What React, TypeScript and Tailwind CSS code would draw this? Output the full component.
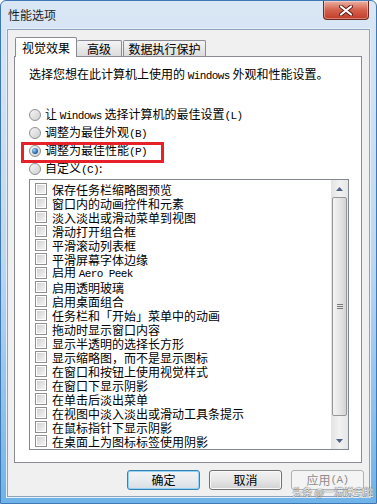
import React from "react";

const cjk = "font-['Noto_Sans_CJK_SC','Noto_Sans',sans-serif]";

// half-width latin, SimSun-like
const L = ({ t }: { t: string }) => (
  <span className="font-['Liberation_Mono',monospace] text-[11px] tracking-[-0.6px]">{t}</span>
);

const items: React.ReactNode[] = [
  "保存任务栏缩略图预览",
  "窗口内的动画控件和元素",
  "淡入淡出或滑动菜单到视图",
  "滑动打开组合框",
  "平滑滚动列表框",
  "平滑屏幕字体边缘",
  <>启用 <L t="Aero Peek" /></>,
  "启用透明玻璃",
  "启用桌面组合",
  "任务栏和「开始」菜单中的动画",
  "拖动时显示窗口内容",
  "显示半透明的选择长方形",
  "显示缩略图，而不是显示图标",
  "在窗口和按钮上使用视觉样式",
  "在窗口下显示阴影",
  "在单击后淡出菜单",
  "在视图中淡入淡出或滑动工具条提示",
  "在鼠标指针下显示阴影",
  "在桌面上为图标标签使用阴影",
];

const Radio = ({ checked = false }: { checked?: boolean }) => (
  <span className="flex h-[12px] w-[12px] shrink-0 items-center justify-center rounded-full border border-[#8e8f8f] bg-gradient-to-br from-[#f6f6f6] to-[#cfcfcf]">
    {checked && (
      <span className="h-[6px] w-[6px] rounded-full bg-[radial-gradient(circle_at_35%_35%,#9fd3f7,#1b5a9e_70%)]" />
    )}
  </span>
);

const Check = () => (
  <span className="flex h-[12px] w-[12px] shrink-0 items-center justify-center border border-[#8e8f8f] bg-white">
    <span className="h-[8px] w-[8px] bg-gradient-to-br from-[#d2d2d2] to-[#f4f4f4]" />
  </span>
);

const Arrow = ({ up }: { up?: boolean }) => (
  <svg width="7" height="4" viewBox="0 0 7 4">
    <path d={up ? "M0 4 L3.5 0 L7 4 Z" : "M0 0 L3.5 4 L7 0 Z"} fill="#4d6185" />
  </svg>
);

const Radiorow = ({ checked, children }: { checked?: boolean; children: React.ReactNode }) => (
  <div className="flex h-[18px] items-center gap-[4px]">
    <Radio checked={checked} />
    <span className="leading-[14px]">{children}</span>
  </div>
);

export default function App() {
  return (
    <div
      className={`relative flex h-[504px] w-[377px] flex-col overflow-hidden rounded-t-[6px] border border-[#3f79b5] bg-gradient-to-b from-[#dae7f5] via-[#bfd8f1] to-[#6fb3e8] text-[12px] leading-[14px] text-black ${cjk}`}
    >
      {/* title bar */}
      <div className="flex h-[28px] shrink-0 items-start justify-between pl-[7px] pr-[7px]">
        <span className="mt-[7px] text-[12px] text-[#1e1e1e]">性能选项</span>
        <div className="flex h-[19px] w-[46px] items-center justify-center rounded-b-[4px] border border-t-0 border-[#6e2a22] bg-gradient-to-b from-[#eab0a4] via-[#d4604c] to-[#c13c29] shadow-[inset_0_0_0_1px_rgba(255,255,255,0.35)]">
          <svg width="14" height="11" viewBox="0 0 14 11">
            <path d="M2 1.5 L12 9.5 M12 1.5 L2 9.5" stroke="#5a1d16" strokeWidth="4" strokeLinecap="round" />
            <path d="M2 1.5 L12 9.5 M12 1.5 L2 9.5" stroke="#ffffff" strokeWidth="2.2" strokeLinecap="round" />
          </svg>
        </div>
      </div>

      {/* client area */}
      <div className="mx-[6px] mb-[6px] flex flex-1 flex-col border border-[#8da2bb] bg-[#f0f0f0] pl-[6px] pt-[7px] shadow-[0_0_0_1px_#e6f0fa]">
        {/* tabs */}
        <div className="ml-[1px] flex h-[19px] items-end">
          <div className="relative z-10 mb-[-1px] flex h-[20px] w-[62px] items-center justify-center rounded-t-[2px] border border-b-0 border-[#898c95] bg-white pt-[1px] text-[12px]">
            视觉效果
          </div>
          <div className="flex h-[16px] w-[45px] items-center justify-center rounded-t-[2px] border border-b-0 border-l-0 border-[#898c95] bg-gradient-to-b from-[#f4f4f4] to-[#dcdcdc] text-[12px]">
            高级
          </div>
          <div className="ml-[1px] flex h-[16px] w-[83px] items-center justify-center rounded-t-[2px] border border-b-0 border-[#898c95] bg-gradient-to-b from-[#f4f4f4] to-[#dcdcdc] text-[12px]">
            数据执行保护
          </div>
        </div>

        {/* panel */}
        <div className="flex h-[407px] w-[348px] flex-col border border-[#898c95] bg-white pl-[14px] pt-[10px]">
          <div>
            选择您想在此计算机上使用的 <L t="Windows" /> 外观和性能设置。
          </div>
          <div className="mt-[23px] flex flex-col">
            <Radiorow>
              让 <L t="Windows" /> 选择计算机的最佳设置<L t="(L)" />
            </Radiorow>
            <Radiorow>
              调整为最佳外观<L t="(B)" />
            </Radiorow>
            <div className="relative">
              <Radiorow checked>
                调整为最佳性能<L t="(P)" />
              </Radiorow>
              <div className="pointer-events-none absolute left-[-8px] top-0 h-[21px] w-[143px] border-[3px] border-[#e62129]" />
            </div>
            <Radiorow>
              自定义<L t="(C)" />:
            </Radiorow>
          </div>

          {/* list box */}
          <div className="mt-[1px] flex h-[271px] w-[320px] border border-[#828790] bg-white">
            <div className="flex flex-1 flex-col pl-[5px] pt-[2px]">
              {items.map((it, i) => (
                <div key={i} className="flex h-[14px] items-center gap-[5px] whitespace-nowrap">
                  <Check />
                  <span className="leading-[13px]">{it}</span>
                </div>
              ))}
            </div>
            {/* scrollbar */}
            <div className="flex w-[17px] flex-col bg-gradient-to-r from-[#e3e3e3] via-[#f2f2f2] to-[#e6e6e6]">
              <div className="flex h-[17px] items-center justify-center">
                <Arrow up />
              </div>
              <div className="mx-[1px] flex h-[219px] items-center justify-center rounded-[2px] border border-[#979797] bg-gradient-to-r from-[#f4f4f4] via-[#e6e6e6] to-[#d4d4d4]">
                <div className="flex flex-col gap-[1px]">
                  <span className="h-[1px] w-[6px] bg-[#7a7a7a]" />
                  <span className="h-[1px] w-[6px] bg-[#7a7a7a]" />
                  <span className="h-[1px] w-[6px] bg-[#7a7a7a]" />
                </div>
              </div>
              <div className="flex-1" />
              <div className="flex h-[17px] items-center justify-center">
                <Arrow />
              </div>
            </div>
          </div>
        </div>

        {/* buttons */}
        <div className="mt-[7px] flex gap-[9px] pl-[113px]">
          <button className="flex h-[20px] w-[73px] items-center justify-center rounded-[3px] border border-[#3c7fb1] bg-gradient-to-b from-[#f2f2f2] via-[#e8ecf0] to-[#d6dde4] shadow-[inset_0_0_0_1px_#8fd3f5]">
            确定
          </button>
          <button className="flex h-[20px] w-[73px] items-center justify-center rounded-[3px] border border-[#707070] bg-gradient-to-b from-[#f2f2f2] via-[#e6e6e6] to-[#d2d2d2] shadow-[inset_0_0_0_1px_#fafafa]">
            取消
          </button>
          <button className="flex h-[20px] w-[73px] items-center justify-center rounded-[3px] border border-[#adb2b5] bg-[#f4f4f4] text-[#8d8d8d]">
            应用<L t="(A)" />
          </button>
        </div>
      </div>

      {/* watermark */}
      <div className="pointer-events-none absolute bottom-[5px] right-[2px] text-[10px] leading-[12px] text-[#f4f4f4] [text-shadow:0_0_1px_#555,0_0_1px_#555]">
        头条 @一满说电脑
      </div>
    </div>
  );
}
